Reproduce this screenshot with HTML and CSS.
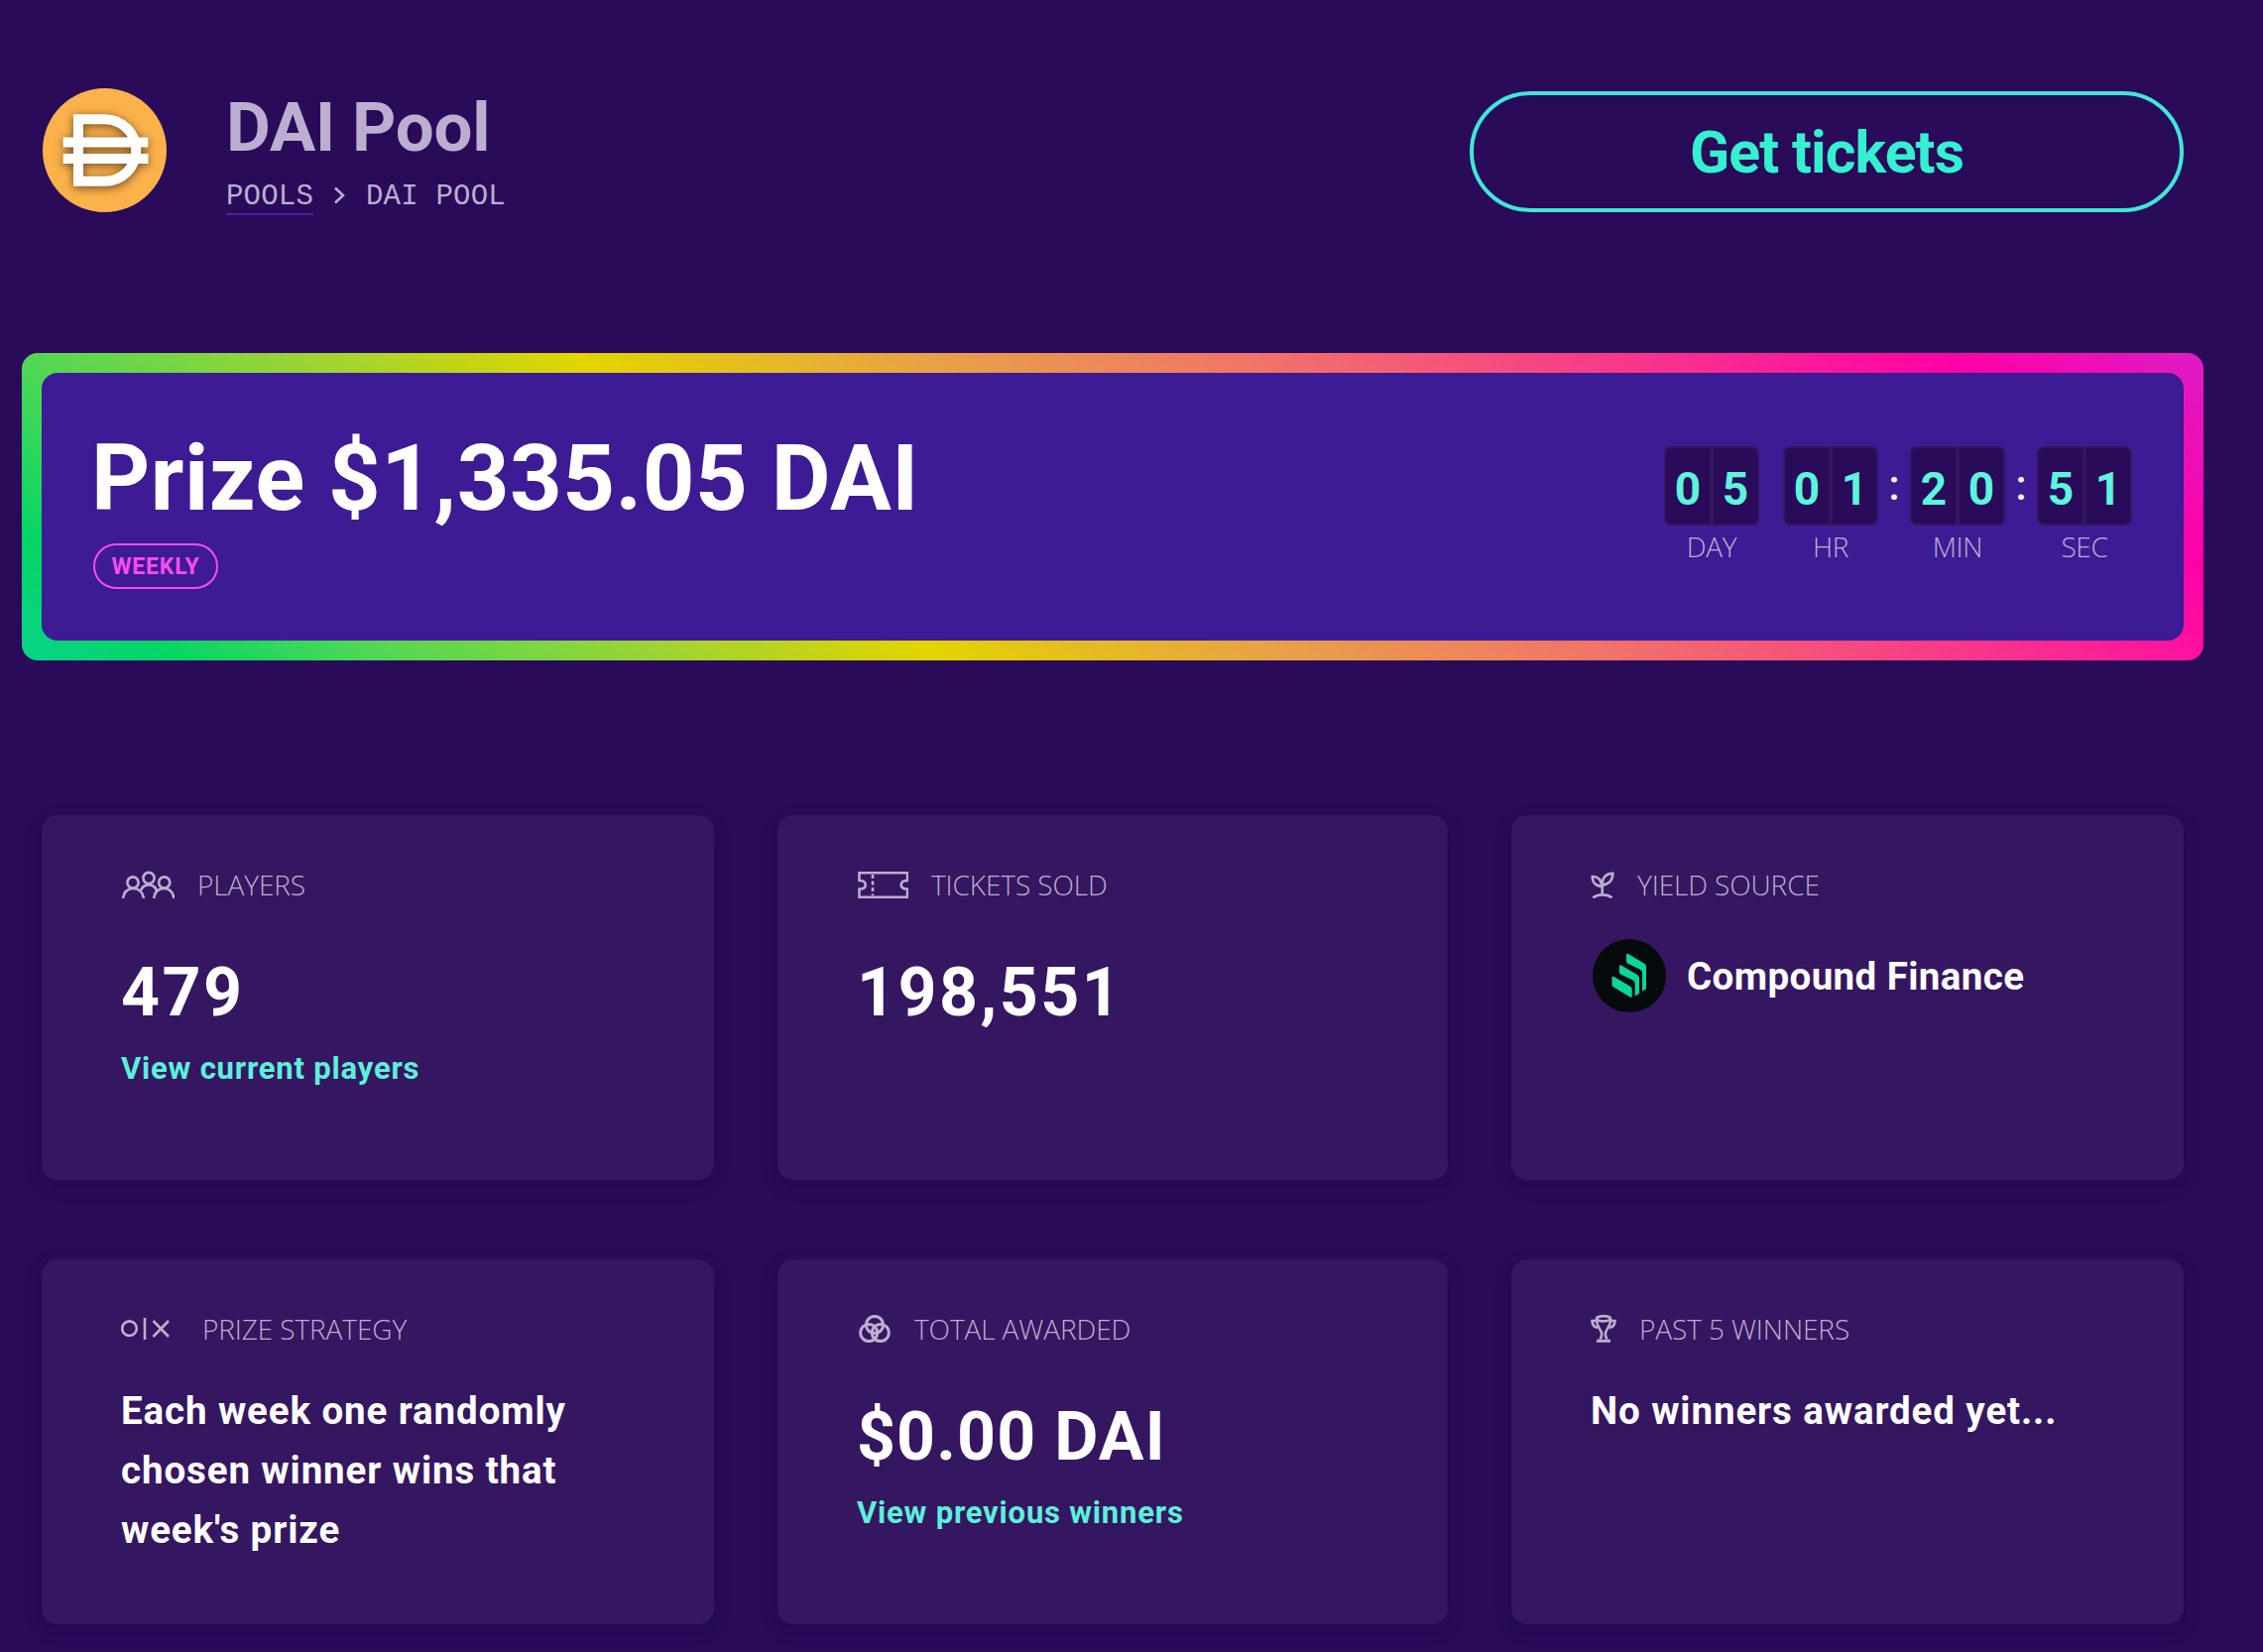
FILE: index.html
```html
<!DOCTYPE html>
<html lang="en">
<head>
    <meta charset="UTF-8">
    <meta name="viewport" content="width=device-width, initial-scale=1.0">
    <title>DAI Pool</title>
    <link rel="stylesheet" href="styles.css">
</head>
<body>

    <div class="page">
        <header class="pool-header">
            <svg class="pool-logo" viewBox="0 0 124 124" aria-hidden="true">
                <circle cx="62" cy="62" r="62" fill="#fbb24b"/>
                <g class="dai-mark" fill="none" stroke="#fff" stroke-width="10">
                    <path d="M35.7 31H62c17.5 0 31.5 14 31.5 31S79.5 93 62 93H35.7z"/>
                    <path d="M20.5 54h85M20.5 70.5h85"/>
                </g>
            </svg>

            <div class="pool-name">
                <h1>DAI Pool</h1>
                <div class="breadcrumb">
                    <a href="#">POOLS</a>
                    <svg class="chevron" viewBox="0 0 12 18"><path d="M2 1.5l8 7.5l-8 7.5"/></svg>
                    <span>DAI POOL</span>
                </div>
            </div>

            <a class="btn-tickets" href="#">Get tickets</a>
        </header>

        <section class="prize-border">
            <div class="prize">
                <div class="prize-info">
                    <h2>Prize $1,335.05 DAI</h2>
                    <span class="badge">WEEKLY</span>
                </div>

                <div class="countdown">
                    <div class="unit unit-day">
                        <div class="digits"><span>0</span><span>5</span></div>
                        <div class="unit-label">DAY</div>
                    </div>
                    <div class="unit">
                        <div class="digits"><span>0</span><span>1</span></div>
                        <div class="unit-label">HR</div>
                    </div>
                    <div class="colon">:</div>
                    <div class="unit">
                        <div class="digits"><span>2</span><span>0</span></div>
                        <div class="unit-label">MIN</div>
                    </div>
                    <div class="colon">:</div>
                    <div class="unit">
                        <div class="digits"><span>5</span><span>1</span></div>
                        <div class="unit-label">SEC</div>
                    </div>
                </div>
            </div>
        </section>

        <section class="cards">
            <div class="card">
                <div class="card-title">
                    <svg width="54" height="28" viewBox="0 0 54 28">
                        <circle cx="12" cy="12" r="5.6"/>
                        <circle cx="28" cy="7.5" r="5.6"/>
                        <circle cx="43.7" cy="12" r="5.6"/>
                        <path d="M2 28c1-6 4.5-10 10.300-10S22 22 23 28M33 28c1-6 4.500-10 10.300-10S52.500 22 53.500 28"/>
                        <path d="M20 20c3-7.500 13-7.500 16 0"/>
                    </svg>
                    <span>PLAYERS</span>
                </div>
                <div class="figure figure-count">479</div>
                <a class="card-link" href="#">View current players</a>
            </div>

            <div class="card">
                <div class="card-title">
                    <svg width="52" height="28" viewBox="-1 0 52 28">
                        <path d="M1.500 2.300H50V10c-3.500 0-6.300 1.500-6.300 4.300s2.800 4.300 6.300 4.300V26.800H1.500V18.600c3.500 0 6.300-1.500 6.300-4.300S5 10 1.500 10z"/>
                        <path d="M15 4v21" stroke-dasharray="4 2.500"/>
                    </svg>
                    <span>TICKETS SOLD</span>
                </div>
                <div class="figure figure-count">198,551</div>
            </div>

            <div class="card">
                <div class="card-title">
                    <svg width="24" height="28" viewBox="0 0 24 28">
                        <path d="M11.700 25V13M2.300 27.500c4.500-4.200 14.500-4.200 19.200 0"/>
                        <path d="M11.700 16C10.500 9.500 7 5.500 1.800 6c-.3 5.500 3 9.500 9.900 10z"/>
                        <path d="M11.700 14.500C11.500 7 15.500 2.800 22.300 2.800c0 6.500-3.500 11.200-10.600 11.700z"/>
                    </svg>
                    <span>YIELD SOURCE</span>
                </div>
                <div class="source">
                    <svg class="source-logo" viewBox="0 0 74 74">
                        <circle cx="37" cy="37" r="37" fill="#050a0c"/>
                        <g fill="#0ad69a">
                            <path d="M34 16q0-2 2-1l16.500 10q1.500 1 1.500 3v22.500l-4 2V34q0-2-2-3.200L35 24.500q-1-.6-1-2z"/>
                            <path d="M27 27.500q0-2 2-1l16 9.500q2 1.200 2 3.500V55l-4.300 2.500V45q0-2.300-2-3.500L28 35.500q-1-.6-1-2z"/>
                            <path d="M19.500 39q0-2 2-1l16 9.500q2.200 1.300 2.200 3.500v6.500q0 2-2 1L20.500 48q-1-.7-1-2z"/>
                        </g>
                    </svg>
                    <span>Compound Finance</span>
                </div>
            </div>

            <div class="card">
                <div class="card-title">
                    <svg width="59" height="28" viewBox="0 0 59 28">
                        <circle cx="8.500" cy="13.700" r="7.300"/>
                        <path d="M24 3v22M32.500 6l15.500 16M48 6l-15.500 16"/>
                    </svg>
                    <span>PRIZE STRATEGY</span>
                </div>
                <p class="card-text">Each week one randomly chosen winner wins that week's prize</p>
            </div>

            <div class="card">
                <div class="card-title">
                    <svg class="icon-bold" width="35" height="28" viewBox="0 0 35 28">
                        <circle cx="18" cy="10" r="8.600"/>
                        <circle cx="12.200" cy="18" r="8.600"/>
                        <circle cx="23.800" cy="18" r="8.600"/>
                    </svg>
                    <span>TOTAL AWARDED</span>
                </div>
                <div class="figure">$0.00 DAI</div>
                <a class="card-link" href="#">View previous winners</a>
            </div>

            <div class="card">
                <div class="card-title">
                    <svg width="26" height="28" viewBox="0 0 26 28">
                        <ellipse cx="13" cy="3.800" rx="7" ry="2.600"/>
                        <path d="M5.800 4c0 9 5.400 10.500 5.400 15.500 0 2-.7 3.500-2 5M20.200 4c0 9-5.400 10.500-5.400 15.500 0 2 .7 3.500 2 5"/>
                        <path d="M5.800 6H1.500c0 3.500 2 6.500 6 7M20.200 6h4.300c0 3.500-2 6.500-6 7"/>
                        <path d="M6 26.300h14" stroke-width="3"/>
                    </svg>
                    <span>PAST 5 WINNERS</span>
                </div>
                <p class="card-text">No winners awarded yet...</p>
            </div>
        </section>
    </div>

</body>
</html>
```
FILE: styles.css
```css
* {
    box-sizing: border-box;
}
body {
    margin: 0;
    background-color: #290b5a;
    color: #fff;
    font-family: Roboto, sans-serif;
    font-weight: 700;
}
a {
    text-decoration: none;
}
h1,
h2,
p {
    margin: 0;
}
.page {
    padding: 89px 80px 28px 42px;
}

/* Header */
.pool-header {
    display: flex;
    align-items: flex-start;
    height: 124px;
}
.pool-logo {
    width: 125px;
    height: 125px;
    margin-left: 1px;
}
.dai-mark {
    filter: drop-shadow(0 2px 5px rgba(60, 40, 20, 0.75));
}
.pool-name {
    margin: 4px 0 0 60px;
    color: #bcaed0;
}
.pool-name h1 {
    font-size: 69px;
    line-height: 72px;
    letter-spacing: -0.2px;
}
.breadcrumb {
    display: flex;
    align-items: flex-start;
    margin-top: 17px;
    font-family: "Liberation Mono", monospace;
    font-size: 29px;
    font-weight: 400;
    line-height: 33px;
    letter-spacing: 0.2px;
}
.breadcrumb a {
    color: inherit;
    border-bottom: 2px solid #4c249f;
}
.chevron {
    width: 12px;
    height: 18px;
    margin: 6px 21px 0 20px;
    fill: none;
    stroke: #bcaed0;
    stroke-width: 2.5;
}
.btn-tickets {
    display: flex;
    align-items: center;
    justify-content: center;
    width: 720px;
    height: 122px;
    margin: 3px 0 0 auto;
    border: 4px solid #3fe8d6;
    border-radius: 61px;
    color: #35f0d0;
    font-size: 59px;
    letter-spacing: -0.9px;
}

/* Prize banner */
.prize-border {
    margin: 143px -20px 0;
    padding: 20px;
    border-radius: 16px;
    background: linear-gradient(40deg, #08d48a 0%, #04d664 6%, #4fd755 14%, #9ad434 25%, #e2d400 36%, #e8a048 50%, #f1716a 63%, #ff00a8 90%, #dd1cc4 100%);
}
.prize {
    display: flex;
    justify-content: space-between;
    height: 270px;
    padding: 59px 52px 0 50px;
    border-radius: 16px;
    background-color: #3d1b94;
}
.prize h2 {
    font-size: 92px;
    line-height: 96px;
    letter-spacing: 0.5px;
}
.badge {
    display: flex;
    align-items: center;
    justify-content: center;
    width: 126px;
    height: 46px;
    margin: 17px 0 0 2px;
    border: 2px solid #f94bf0;
    border-radius: 23px;
    color: #f94bf0;
    font-size: 23px;
    letter-spacing: 0.8px;
}
.countdown {
    display: flex;
    padding-top: 15px;
}
.unit-day {
    margin-right: 24px;
}
.digits {
    display: flex;
    width: 96px;
    height: 80px;
}
.digits span {
    flex: 1;
    padding-top: 4px;
    border: 2px solid #33175e;
    background-color: #290b5a;
    color: #5bf5dc;
    font-size: 46px;
    line-height: 74px;
    text-align: center;
}
.digits span:first-child {
    border-radius: 7px 0 0 7px;
}
.digits span:last-child {
    border-radius: 0 7px 7px 0;
}
.unit-label {
    margin-top: 4px;
    color: #bcaed0;
    font-family: "Open Sans", sans-serif;
    font-size: 28px;
    font-weight: 340;
    line-height: 34px;
    letter-spacing: -0.3px;
    text-align: center;
}
.colon {
    width: 32px;
    font-size: 42px;
    font-weight: 500;
    line-height: 80px;
    text-align: center;
}

/* Cards */
.cards {
    display: grid;
    grid-template-columns: 678px 676px 678px;
    grid-auto-rows: 368px;
    gap: 80px 64px;
    margin-top: 156px;
}
.card {
    padding: 56px 80px 0;
    border-radius: 16px;
    background-color: #351660;
    box-shadow: 0 6px 16px rgba(20, 0, 50, 0.25);
}
.card-title {
    display: flex;
    align-items: center;
    gap: 23px;
    height: 28px;
    color: #bcaed0;
    font-family: "Open Sans", sans-serif;
    font-size: 28px;
    font-weight: 340;
    letter-spacing: -0.1px;
    line-height: 26px;
    white-space: nowrap;
}
.card-title svg {
    flex-shrink: 0;
    fill: none;
    stroke: #bcaed0;
    stroke-width: 2.6;
}
.card-title .icon-bold {
    stroke-width: 3;
}
.figure {
    margin-top: 55px;
    font-size: 68px;
    line-height: 80px;
    letter-spacing: 1.1px;
}
.figure-count {
    letter-spacing: 2.5px;
}
.card-link {
    display: block;
    margin-top: 17px;
    color: #5bf0dc;
    font-size: 31px;
    line-height: 40px;
    letter-spacing: 0.8px;
}
.card-text {
    margin-top: 39px;
    font-size: 38.5px;
    line-height: 60px;
    letter-spacing: 0.9px;
}
.source {
    display: flex;
    align-items: center;
    gap: 21px;
    margin: 41px 0 0 2px;
    font-size: 38.5px;
    letter-spacing: 0.4px;
}
.source-logo {
    width: 74px;
    height: 74px;
}
```
